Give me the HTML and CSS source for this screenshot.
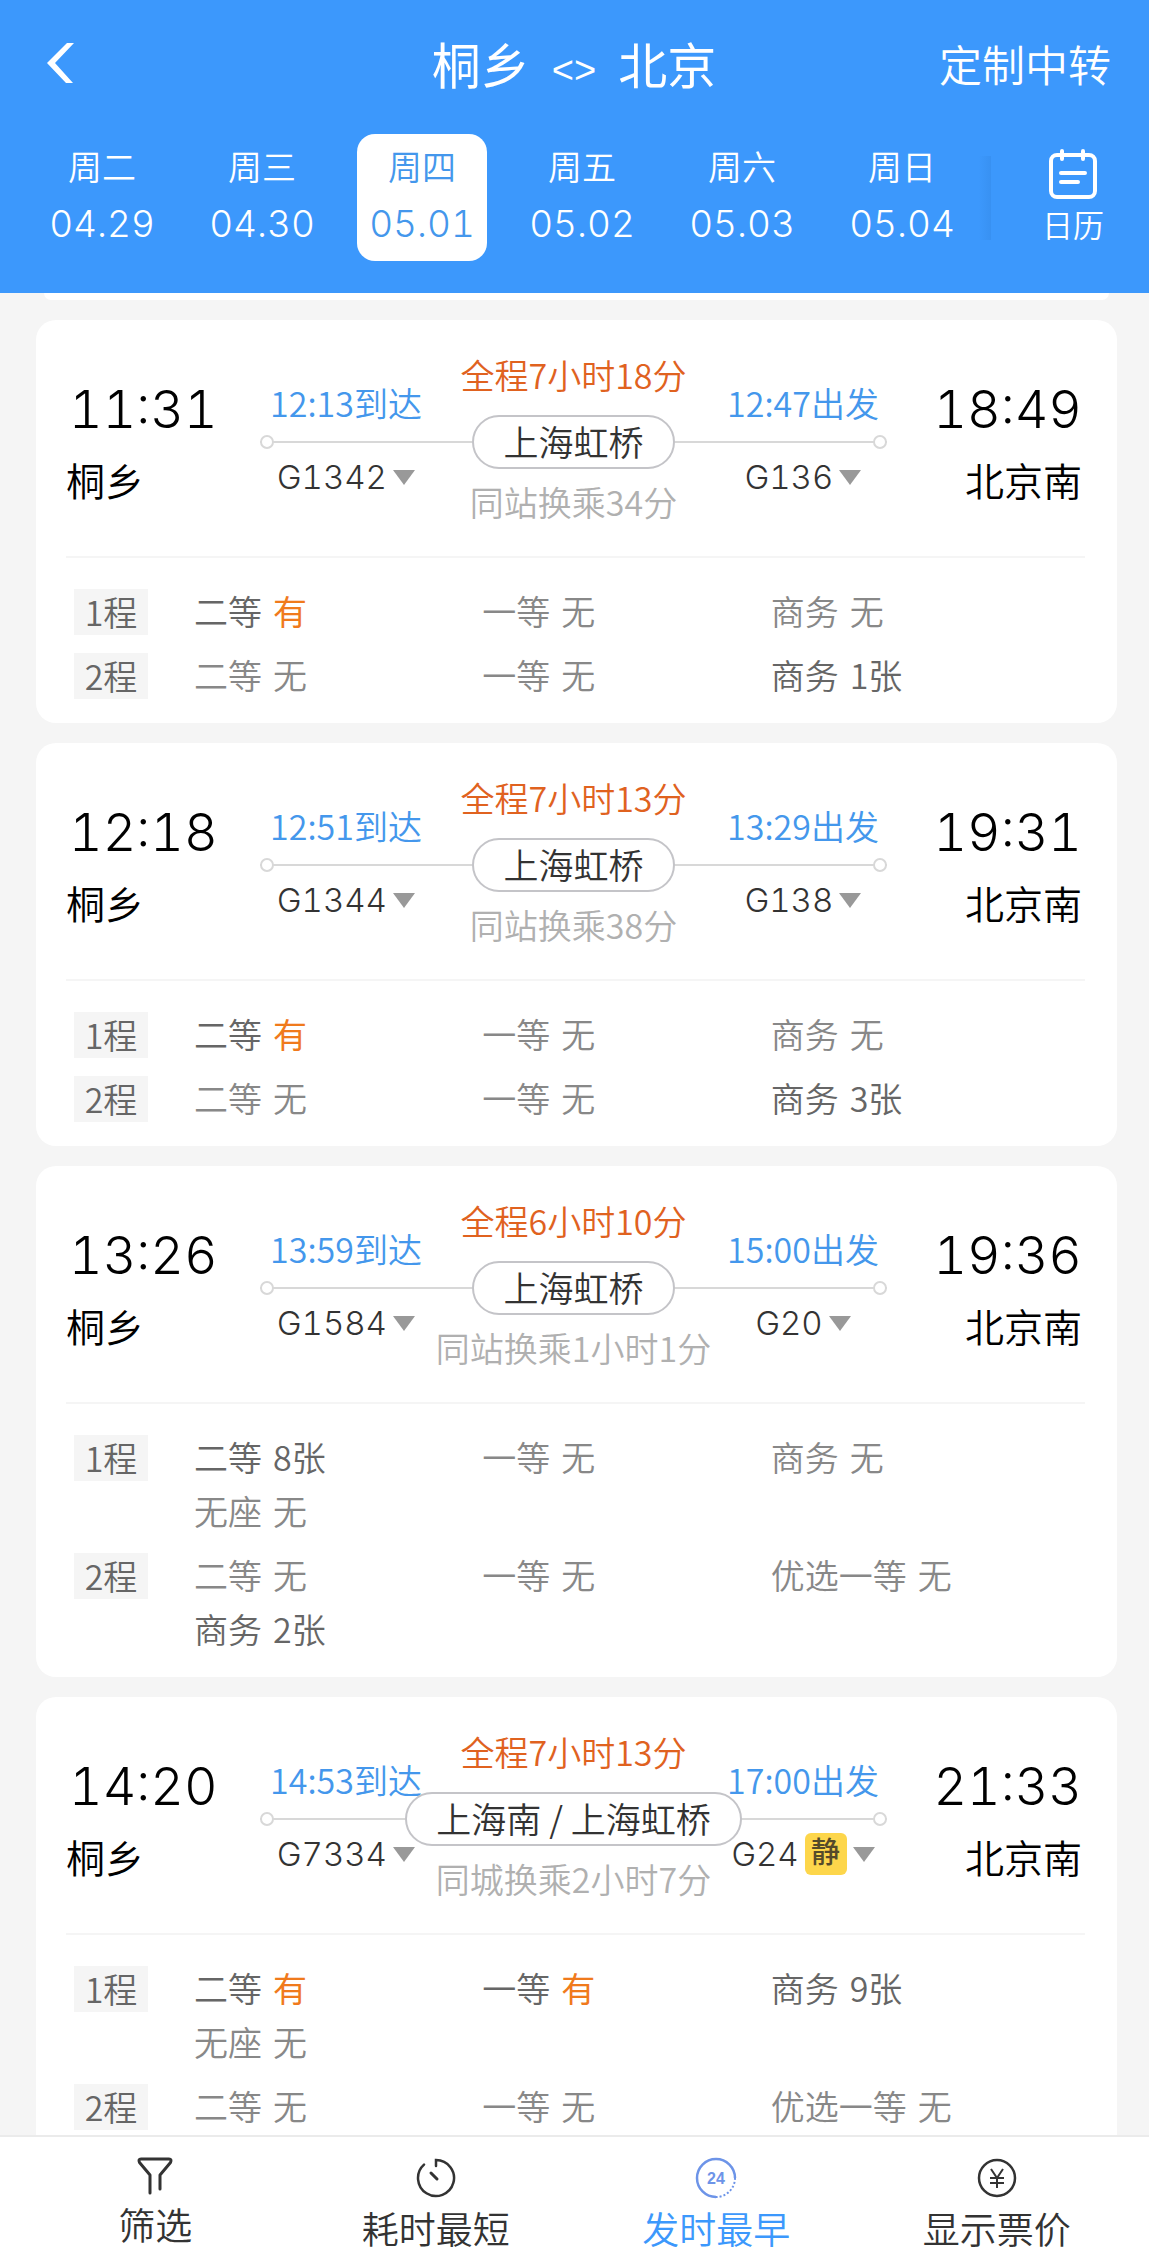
FILE: index.html
```
<!DOCTYPE html>
<html lang="zh-CN">

<head>
    <meta charset="UTF-8">
    <meta name="viewport" content="width=device-width, initial-scale=1.0">
    <title>桐乡 - 北京</title>
    <link rel="stylesheet" href="styles.css">
</head>

<body>
    <header class="header">
        <div class="nav">
            <button class="back" aria-label="返回">
                <svg width="28" height="40" viewBox="0 0 28 40" fill="currentColor">
                    <path d="M20 0h7L8 20l18 20h-7L0 20z" />
                </svg>
            </button>
            <h1 class="title"><span>桐乡</span><span class="swap">&lt;&gt;</span><span>北京</span></h1>
            <a class="custom" href="#">定制中转</a>
        </div>
        <div class="dates">
            <button class="date"><span class="week">周二</span><span class="day">04.29</span></button>
            <button class="date"><span class="week">周三</span><span class="day">04.30</span></button>
            <button class="date active"><span class="week">周四</span><span class="day">05.01</span></button>
            <button class="date"><span class="week">周五</span><span class="day">05.02</span></button>
            <button class="date"><span class="week">周六</span><span class="day">05.03</span></button>
            <button class="date"><span class="week">周日</span><span class="day">05.04</span></button>
            <span class="shade"></span>
            <button class="calendar">
                <svg width="48" height="50" viewBox="0 0 48 50" fill="none" stroke="currentColor" stroke-width="4" stroke-linecap="round">
                    <rect x="2" y="6" width="44" height="42" rx="6" />
                    <path d="M13 2v8M34 2v8M12 24h24M12 33h17" />
                </svg>
                <span>日历</span>
            </button>
        </div>
    </header>

    <main class="list">
        <div class="card-tail"></div>

        <section class="card">
            <div class="summary">
                <div class="stop"><span class="time">11:31</span><span class="station">桐乡</span></div>
                <div class="route">
                    <div class="track"></div>
                    <div class="leg leg-in"><span class="at">12:13到达</span><button class="train">G1342<i class="caret"></i></button></div>
                    <div class="leg leg-out"><span class="at">12:47出发</span><button class="train">G136<i class="caret"></i></button></div>
                    <div class="transfer"><span class="total">全程7小时18分</span><span class="hub">上海虹桥</span><span class="note">同站换乘34分</span></div>
                </div>
                <div class="stop stop-end"><span class="time">18:49</span><span class="station">北京南</span></div>
            </div>
            <div class="seats">
                <span class="tag">1程</span>
                <ul class="seat-list">
                    <li>二等 <b>有</b></li>
                    <li class="none">一等 <span>无</span></li>
                    <li class="none">商务 <span>无</span></li>
                </ul>
                <span class="tag">2程</span>
                <ul class="seat-list">
                    <li class="none">二等 <span>无</span></li>
                    <li class="none">一等 <span>无</span></li>
                    <li>商务 <span>1张</span></li>
                </ul>
            </div>
        </section>

        <section class="card">
            <div class="summary">
                <div class="stop"><span class="time">12:18</span><span class="station">桐乡</span></div>
                <div class="route">
                    <div class="track"></div>
                    <div class="leg leg-in"><span class="at">12:51到达</span><button class="train">G1344<i class="caret"></i></button></div>
                    <div class="leg leg-out"><span class="at">13:29出发</span><button class="train">G138<i class="caret"></i></button></div>
                    <div class="transfer"><span class="total">全程7小时13分</span><span class="hub">上海虹桥</span><span class="note">同站换乘38分</span></div>
                </div>
                <div class="stop stop-end"><span class="time">19:31</span><span class="station">北京南</span></div>
            </div>
            <div class="seats">
                <span class="tag">1程</span>
                <ul class="seat-list">
                    <li>二等 <b>有</b></li>
                    <li class="none">一等 <span>无</span></li>
                    <li class="none">商务 <span>无</span></li>
                </ul>
                <span class="tag">2程</span>
                <ul class="seat-list">
                    <li class="none">二等 <span>无</span></li>
                    <li class="none">一等 <span>无</span></li>
                    <li>商务 <span>3张</span></li>
                </ul>
            </div>
        </section>

        <section class="card">
            <div class="summary">
                <div class="stop"><span class="time">13:26</span><span class="station">桐乡</span></div>
                <div class="route">
                    <div class="track"></div>
                    <div class="leg leg-in"><span class="at">13:59到达</span><button class="train">G1584<i class="caret"></i></button></div>
                    <div class="leg leg-out"><span class="at">15:00出发</span><button class="train">G20<i class="caret"></i></button></div>
                    <div class="transfer"><span class="total">全程6小时10分</span><span class="hub">上海虹桥</span><span class="note">同站换乘1小时1分</span></div>
                </div>
                <div class="stop stop-end"><span class="time">19:36</span><span class="station">北京南</span></div>
            </div>
            <div class="seats">
                <span class="tag">1程</span>
                <ul class="seat-list">
                    <li>二等 <span>8张</span></li>
                    <li class="none">一等 <span>无</span></li>
                    <li class="none">商务 <span>无</span></li>
                    <li class="none">无座 <span>无</span></li>
                </ul>
                <span class="tag">2程</span>
                <ul class="seat-list">
                    <li class="none">二等 <span>无</span></li>
                    <li class="none">一等 <span>无</span></li>
                    <li class="none">优选一等 <span>无</span></li>
                    <li>商务 <span>2张</span></li>
                </ul>
            </div>
        </section>

        <section class="card">
            <div class="summary">
                <div class="stop"><span class="time">14:20</span><span class="station">桐乡</span></div>
                <div class="route">
                    <div class="track"></div>
                    <div class="leg leg-in"><span class="at">14:53到达</span><button class="train">G7334<i class="caret"></i></button></div>
                    <div class="leg leg-out"><span class="at">17:00出发</span><button class="train">G24<span class="quiet">静</span><i class="caret"></i></button></div>
                    <div class="transfer"><span class="total">全程7小时13分</span><span class="hub">上海南 / 上海虹桥</span><span class="note">同城换乘2小时7分</span></div>
                </div>
                <div class="stop stop-end"><span class="time">21:33</span><span class="station">北京南</span></div>
            </div>
            <div class="seats">
                <span class="tag">1程</span>
                <ul class="seat-list">
                    <li>二等 <b>有</b></li>
                    <li>一等 <b>有</b></li>
                    <li>商务 <span>9张</span></li>
                    <li class="none">无座 <span>无</span></li>
                </ul>
                <span class="tag">2程</span>
                <ul class="seat-list">
                    <li class="none">二等 <span>无</span></li>
                    <li class="none">一等 <span>无</span></li>
                    <li class="none">优选一等 <span>无</span></li>
                </ul>
            </div>
        </section>
    </main>

    <footer class="toolbar">
        <button class="tool">
            <svg width="36" height="38" viewBox="0 0 36 38" fill="none" stroke="currentColor" stroke-width="3" stroke-linecap="round" stroke-linejoin="round">
                <path d="M13 36V18L2.500 5.500Q1 2 4 2h28q3 0 1.500 3.500L23 18v14" />
            </svg>
            <span>筛选</span>
        </button>
        <button class="tool">
            <svg width="42" height="42" viewBox="0 0 42 42" fill="none" stroke="currentColor" stroke-width="2.500" stroke-linecap="round">
                <path d="M21 9V3a18 18 0 1 1-12 4.600" />
                <path d="M16 16l6 6" stroke-width="3" />
            </svg>
            <span>耗时最短</span>
        </button>
        <button class="tool active">
            <svg width="42" height="42" viewBox="0 0 42 42" fill="none" stroke="#6d94e8" stroke-width="2.500">
                <path d="M40 21a19 19 0 1 0-19 19" />
                <path d="M40 21a19 19 0 0 1-19 19" stroke-width="2" stroke-dasharray="2 2" />
                <text class="num" x="21" y="27" text-anchor="middle">24</text>
            </svg>
            <span>发时最早</span>
        </button>
        <button class="tool">
            <svg width="42" height="42" viewBox="0 0 42 42" fill="none" stroke="currentColor" stroke-width="2.500">
                <circle cx="21" cy="21" r="18" />
                <path d="M15 12l6 9 6-9M21 21v10M14 21h14M14 26h14" stroke-width="2" />
            </svg>
            <span>显示票价</span>
        </button>
    </footer>
</body>

</html>
```
FILE: styles.css
```
* {
    margin: 0;
    padding: 0;
    box-sizing: border-box;
}

body {
    display: flex;
    flex-direction: column;
    height: 100vh;
    overflow: hidden;
    background: #f5f5f5;
    color: #333;
    font-family: "Noto Sans CJK SC", sans-serif;
    font-size: 34px;
    font-weight: 350;
    line-height: 46px;
}

button {
    background: none;
    border: none;
    color: inherit;
    font: inherit;
    cursor: pointer;
}

a {
    color: inherit;
    text-decoration: none;
}

ul {
    list-style: none;
}

svg {
    display: block;
}

/* header */
.header {
    flex: none;
    background: #3c98fc;
    color: #fff;
    padding: 28px 38px 32px 37px;
}

.nav {
    display: grid;
    grid-template-columns: 1fr auto 1fr;
    align-items: center;
    height: 70px;
    line-height: 44px;
}

.back {
    justify-self: start;
    padding-left: 10px;
}

.title {
    display: flex;
    align-items: center;
    gap: 22px;
    font-size: 49px;
    font-weight: 400;
}

.swap {
    font-family: "Liberation Sans", sans-serif;
    font-size: 38px;
    padding-top: 14px;
}

.custom {
    justify-self: end;
    font-size: 43px;
}

.dates {
    display: flex;
    align-items: center;
    margin-top: 36px;
}

.date {
    flex: none;
    display: flex;
    flex-direction: column;
    align-items: center;
    gap: 12px;
    width: 130px;
    height: 127px;
    margin-right: 30px;
    padding-top: 9px;
    border-radius: 18px;
}

.date.active {
    background: #fff;
    color: #4497ec;
}

.day,
.time,
.train {
    font-family: Inter, "Noto Sans CJK SC", sans-serif;
    font-variant-numeric: tabular-nums;
}

.day {
    font-size: 37px;
}

.shade {
    width: 12px;
    height: 84px;
    margin-left: -18px;
    background: linear-gradient(90deg, #3c98fc, #3891f2);
}

.calendar {
    display: flex;
    flex-direction: column;
    align-items: center;
    gap: 2px;
    margin-left: auto;
    padding-right: 7px;
    font-size: 31px;
}

/* transfer plans */
.list {
    flex: 1;
    min-height: 0;
    overflow: hidden;
    display: flex;
    flex-direction: column;
    gap: 20px;
    padding: 0 32px 0 36px;
}

/* bottom edge of the plan scrolled away under the header */
.card-tail {
    flex: none;
    height: 7px;
    margin: 0 8px;
    background: #fff;
    border-radius: 0 0 20px 20px;
}

.card {
    flex: none;
    background: #fff;
    border-radius: 20px;
    padding: 0 32px 24px 30px;
}

.summary {
    display: flex;
    justify-content: space-between;
    height: 238px;
    border-bottom: 2px solid #f5f5f5;
}

.stop {
    display: flex;
    flex-direction: column;
    gap: 16px;
    padding-top: 60px;
    width: 194px;
    color: #000;
}

.stop-end {
    align-items: flex-end;
    width: 198px;
    padding-right: 3px;
}

.time {
    font-size: 52px;
    line-height: 60px;
    padding-left: 3px;
}

.station {
    font-size: 39px;
}

.route {
    flex: 1;
    display: grid;
    grid-template-columns: 1fr 1fr;
}

.track,
.transfer {
    grid-area: 1 / 1 / 2 / 3;
}

.track {
    height: 2px;
    margin-top: 121px;
    background: #d8d8d8;
    display: flex;
    justify-content: space-between;
    align-items: center;
}

.track::before,
.track::after {
    content: "";
    width: 10px;
    height: 10px;
    border: 2px solid #d8d8d8;
    border-radius: 50%;
    background: #fff;
}

.leg {
    grid-row: 1;
    display: flex;
    flex-direction: column;
    align-items: center;
    gap: 28px;
    padding-top: 60px;
}

.leg-in {
    grid-column: 1;
    width: 172px;
}

.leg-out {
    grid-column: 2;
    justify-self: end;
    width: 168px;
}

.at {
    color: #4497ec;
    white-space: nowrap;
}

.train {
    display: flex;
    align-items: center;
    gap: 6px;
    font-size: 33px;
    position: relative;
    z-index: 1;
}

.caret {
    border: 11px solid transparent;
    border-top: 15px solid #999;
    border-bottom: none;
}

.quiet {
    width: 42px;
    height: 42px;
    border-radius: 6px;
    background: #fdd64b;
    color: #554a2a;
    font-size: 29px;
    font-weight: 500;
    line-height: 40px;
    text-align: center;
}

.transfer {
    display: flex;
    flex-direction: column;
    align-items: center;
    padding-top: 32px;
}

.total {
    color: #e0621f;
}

.hub {
    height: 54px;
    margin: 17px 0 10px;
    padding: 0 29px;
    border: 2px solid #c4c4c8;
    border-radius: 27px;
    background: #fff;
    font-size: 35px;
    line-height: 48px;
    white-space: nowrap;
}

.note {
    color: #b0b0b0;
}

/* seats left on each leg */
.seats {
    display: grid;
    grid-template-columns: 74px 1fr;
    column-gap: 46px;
    row-gap: 18px;
    padding: 31px 26px 0 8px;
    color: #666;
}

.tag {
    height: 46px;
    background: #f5f5f5;
    text-align: center;
}

.seat-list {
    display: grid;
    grid-template-columns: repeat(3, 1fr);
    row-gap: 8px;
}

.seat-list li {
    display: flex;
    gap: 11px;
    height: 46px;
    line-height: 43px;
    white-space: nowrap;
}

.seat-list .none {
    color: #888;
}

.seat-list b {
    color: #f07a1c;
    font-weight: 400;
}

/* sort bar */
.toolbar {
    flex: none;
    display: flex;
    align-items: flex-start;
    height: 132px;
    padding: 20px 12px 0 15px;
    background: #fff;
    border-top: 2px solid #ebebeb;
}

.tool {
    flex: 1;
    display: flex;
    flex-direction: column;
    align-items: center;
    gap: 6px;
    font-size: 37px;
}

.tool.active {
    color: #3c98fc;
}

.num {
    fill: #6d94e8;
    stroke: none;
    font: bold 16px "Liberation Sans", sans-serif;
}
```
